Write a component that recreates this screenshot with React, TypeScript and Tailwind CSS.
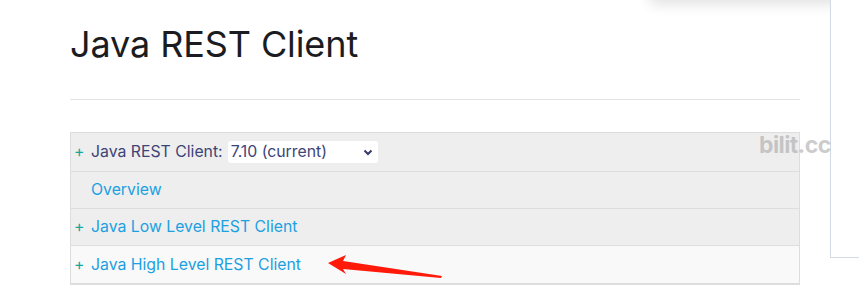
export default function App() {
  const font = { fontFamily: 'Inter, "Noto Sans", sans-serif' };
  return (
    <div className="relative w-[859px] h-[304px] bg-white overflow-hidden" style={font}>
      {/* shadow of a panel above the viewport */}
      <div className="absolute -top-[40px] left-[650px] w-[260px] h-[40px] bg-white shadow-[0_4px_14px_rgba(0,0,0,0.12)]" />
      {/* side panel */}
      <div className="absolute top-0 left-[830px] w-[40px] h-[258px] border-l border-b border-[#d3dae6] bg-white" />

      <div className="pl-[70px] w-[800px]">
        <h1 className="pt-[22px] text-[36px] leading-[44px] text-[#1a1c21] tracking-[-0.1px]">Java REST Client</h1>
        <div className="mt-[33px] border-t border-[#e3e3e3]" />
        <div className="mt-[32px] border border-[#dddddd] border-b-2">
          <div className="h-[39px] flex items-center bg-[#eeeeee] border-b border-[#dddddd] text-[15.8px]">
            <span className="w-[20px] pl-[3px] text-[#16a79c]">+</span>
            <span className="text-[#3d4477]">Java REST Client:</span>
            <div className="ml-[5px] w-[150px] h-[22px] bg-white rounded-[3px] flex items-center justify-between pl-[3px] pr-[5px] text-[#3d4477]">
              <span>7.10 (current)</span>
              <svg width="10" height="7" viewBox="0 0 10 7"><path d="M1.5 1.5 L5 5 L8.5 1.5" stroke="#343a6b" strokeWidth="2" fill="none" /></svg>
            </div>
          </div>
          <div className="h-[37px] flex items-center bg-[#eeeeee] border-b border-[#dddddd] text-[15.8px]">
            <span className="w-[20px]" />
            <span className="text-[#1ba0e2]">Overview</span>
          </div>
          <div className="h-[37px] flex items-center bg-[#eeeeee] border-b border-[#dddddd] text-[15.8px]">
            <span className="w-[20px] pl-[3px] text-[#16a79c]">+</span>
            <span className="text-[#1ba0e2]">Java Low Level REST Client</span>
          </div>
          <div className="h-[37px] flex items-center bg-[#f9f9f9] text-[15.8px]">
            <span className="w-[20px] pl-[3px] text-[#16a79c]">+</span>
            <span className="text-[#1ba0e2]">Java High Level REST Client</span>
          </div>
        </div>
      </div>

      {/* watermark */}
      <div className="absolute top-[128px] left-[759px] text-[23px] font-bold text-[#9a9a9a]/50 tracking-[-0.6px]">bilit.cc</div>

      {/* red annotation arrow */}
      <svg className="absolute top-[250px] left-[320px]" width="130" height="36" viewBox="0 0 130 36">
        <path d="M8 13 L26 5 L23 11 L122 26 L121 28 L23 19 L26 24 Z" fill="#ff1a0a" />
      </svg>
    </div>
  );
}
